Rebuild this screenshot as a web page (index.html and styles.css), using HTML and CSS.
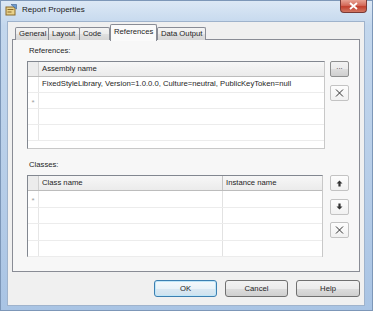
FILE: index.html
```html
<!DOCTYPE html>
<html lang="en">
<head>
  <meta charset="UTF-8" />
  <title>Report Properties</title>
  <link rel="stylesheet" href="styles.css">
</head>
<body>
  <div class="window">
    <div class="titlebar">
      <svg class="app-icon" width="12" height="12" viewBox="0 0 12 12">
        <rect x="1" y="3" width="9" height="8" fill="#e8d18a" stroke="#8a6a2a" stroke-width="1"/>
        <rect x="2.5" y="5" width="6" height="1" fill="#8a6a2a"/>
        <rect x="2.5" y="7.5" width="4" height="1" fill="#8a6a2a"/>
        <path d="M6 0.5 L11.5 0.5 L11.5 5 Z" fill="#6b9ad0" stroke="#3a5f8e" stroke-width="0.6"/>
      </svg>
      <span class="title">Report Properties</span>
      <div class="close-btn">
        <svg width="9" height="8" viewBox="0 0 9 8">
          <path d="M1 1 L8 7 M8 1 L1 7" stroke="#fff" stroke-width="1.8"/>
        </svg>
      </div>
    </div>

    <div class="client">
      <div class="tabs">
        <div class="tab">General</div>
        <div class="tab">Layout</div>
        <div class="tab">Code</div>
        <div class="tab active">References</div>
        <div class="tab">Data Output</div>
      </div>

      <div class="panel">
        <div class="label">References:</div>
        <div class="grid-row">
          <div class="grid grid-refs">
            <div class="g-head">
              <div class="cell corner"></div>
              <div class="cell col-wide">Assembly name</div>
            </div>
            <div class="g-line">
              <div class="cell rowhead"></div>
              <div class="cell col-wide">FixedStyleLibrary, Version=1.0.0.0, Culture=neutral, PublicKeyToken=null</div>
            </div>
            <div class="g-line">
              <div class="cell rowhead"><span class="star">*</span></div>
              <div class="cell col-wide"></div>
            </div>
            <div class="g-line">
              <div class="cell rowhead"></div>
              <div class="cell col-wide"></div>
            </div>
            <div class="g-line">
              <div class="cell rowhead"></div>
              <div class="cell col-wide"></div>
            </div>
          </div>
          <div class="side-btns gap8">
            <div class="sbtn raised">...</div>
            <div class="sbtn flat">
              <svg width="9" height="8" viewBox="0 0 9 8"><path d="M1 0.5 L8 7.5 M8 0.5 L1 7.5" stroke="#333" stroke-width="1"/></svg>
            </div>
          </div>
        </div>

        <div class="label label-classes">Classes:</div>
        <div class="grid-row">
          <div class="grid grid-classes">
            <div class="g-head">
              <div class="cell corner"></div>
              <div class="cell col-class">Class name</div>
              <div class="cell col-inst">Instance name</div>
            </div>
            <div class="g-line">
              <div class="cell rowhead"><span class="star">*</span></div>
              <div class="cell col-class"></div>
              <div class="cell col-inst"></div>
            </div>
            <div class="g-line">
              <div class="cell rowhead"></div>
              <div class="cell col-class"></div>
              <div class="cell col-inst"></div>
            </div>
            <div class="g-line">
              <div class="cell rowhead"></div>
              <div class="cell col-class"></div>
              <div class="cell col-inst"></div>
            </div>
            <div class="g-line">
              <div class="cell rowhead"></div>
              <div class="cell col-class"></div>
              <div class="cell col-inst"></div>
            </div>
          </div>
          <div class="side-btns gap7">
            <div class="sbtn flat">
              <svg width="7" height="7" viewBox="0 0 7 7"><path d="M3.5 0.5 L6.5 3.5 L4.6 3.5 L4.6 6.5 L2.4 6.5 L2.4 3.5 L0.5 3.5 Z" fill="#333"/></svg>
            </div>
            <div class="sbtn flat">
              <svg width="7" height="7" viewBox="0 0 7 7"><path d="M3.5 6.5 L6.5 3.5 L4.6 3.5 L4.6 0.5 L2.4 0.5 L2.4 3.5 L0.5 3.5 Z" fill="#333"/></svg>
            </div>
            <div class="sbtn flat">
              <svg width="9" height="8" viewBox="0 0 9 8"><path d="M1 0.5 L8 7.5 M8 0.5 L1 7.5" stroke="#333" stroke-width="1"/></svg>
            </div>
          </div>
        </div>
      </div>

      <div class="buttons">
        <div class="btn default">OK</div>
        <div class="btn">Cancel</div>
        <div class="btn help">Help</div>
      </div>
    </div>
  </div>
</body>
</html>
```

FILE: styles.css
```css
body {
  margin: 0;
  font-family: 'Liberation Sans', Arial, sans-serif;
  font-size: 7.7px;
  color: #1e1e1e;
}

.window {
  width: 373px;
  height: 311px;
  box-sizing: border-box;
  background: linear-gradient(180deg, #dce8f5 0%, #c3d7ed 8%, #b6cde8 60%, #a9c4e4 100%);
  border: 1px solid #7d97b8;
  padding: 0 7px 5px 6px;
}

.titlebar {
  height: 20px;
  display: flex;
  align-items: flex-start;
}

.app-icon {
  margin: 3px 0 0 -2px;
}

.title {
  margin: 4px 0 0 5px;
  font-size: 8px;
  color: #1a1a1a;
}

.close-btn {
  margin-left: auto;
  margin-top: -1px;
  width: 27px;
  height: 13px;
  box-sizing: border-box;
  border: 1px solid #7a3a36;
  border-top: none;
  border-radius: 0 0 4px 4px;
  background: linear-gradient(180deg, #e8a293 0%, #d46a5a 45%, #c2402e 55%, #d27763 100%);
  display: flex;
  align-items: center;
  justify-content: center;
  margin-right: -2px;
}

.client {
  height: 285px;
  box-sizing: border-box;
  background: #f0f0f0;
  border: 1px solid #9fb3cc;
  padding-top: 2px;
}

.tabs {
  display: flex;
  align-items: flex-end;
  height: 16px;
  margin-left: 7px;
  position: relative;
  z-index: 1;
}

.tab {
  height: 13px;
  box-sizing: border-box;
  border: 1px solid #898c95;
  border-bottom: none;
  margin-right: -1px;
  padding: 0 3px;
  line-height: 12px;
  white-space: nowrap;
  background: linear-gradient(180deg, #f4f4f4 0%, #ececec 50%, #e0e0e0 51%, #d6d6d6 100%);
  border-radius: 2px 2px 0 0;
}

.tab:nth-child(1) { width: 34px; }
.tab:nth-child(2) { width: 32px; }
.tab:nth-child(3) { width: 31px; }
.tab:nth-child(5) { width: 49px; }

.tab.active {
  height: 17px;
  width: 47px;
  margin: 0 0 -1px 1px;
  background: #fafafa;
  line-height: 14px;
  padding-bottom: 2px;
}

.panel {
  height: 233px;
  box-sizing: border-box;
  margin: -1px 4px 0 4px;
  border: 1px solid #898c95;
  background: #f7f7f7;
  padding: 5px 0 0 14px;
}

.label {
  height: 11px;
  line-height: 11px;
  padding-left: 2px;
}

.label-classes {
  margin-top: 10px;
}

.grid-row {
  display: flex;
  margin-top: 5px;
}

.grid {
  width: 298px;
  box-sizing: border-box;
  background: #fff;
  border: 1px solid #828790;
  border-right-color: #c8c8c8;
  border-bottom-color: #c8c8c8;
}

.grid-refs { height: 88px; }
.grid-classes { height: 82px; width: 296px; }

.g-head {
  display: flex;
  height: 15px;
  box-sizing: border-box;
  background: linear-gradient(180deg, #f7f7f7 0%, #ebebeb 100%);
  border-bottom: 1px solid #bcbcbc;
}

.g-line {
  display: flex;
  height: 16px;
  box-sizing: border-box;
  border-bottom: 1px solid #ececec;
}

.grid-classes .g-line { height: 16.5px; }

.cell {
  box-sizing: border-box;
  height: 100%;
  line-height: 14px;
  padding-left: 3px;
  white-space: nowrap;
  overflow: hidden;
}

.corner, .rowhead {
  width: 11px;
  padding: 0;
  border-right: 1px solid #d0d0d0;
}

.corner {
  background: #ececec;
}

.rowhead {
  border-right-color: #e6e6e6;
}

.star {
  display: block;
  text-align: center;
  color: #a0a0a0;
  font-size: 8px;
  line-height: 20px;
}

.col-wide { flex: 1; }
.col-class { width: 184px; border-right: 1px solid #e2e2e2; }
.g-head .col-class { border-right-color: #c4c4c4; }
.col-inst { flex: 1; }

.side-btns {
  display: flex;
  flex-direction: column;
}

.side-btns.gap8 { gap: 8px; margin-left: 5px; }
.side-btns.gap7 { gap: 7.5px; margin-left: 7px; }

.sbtn {
  width: 19px;
  height: 16px;
  box-sizing: border-box;
  border-radius: 2px;
  display: flex;
  align-items: center;
  justify-content: center;
}

.sbtn.raised {
  border: 1px solid #8e8f8f;
  background: linear-gradient(180deg, #f2f2f2 0%, #ebebeb 50%, #dddddd 51%, #cfcfcf 100%);
  line-height: 10px;
  align-items: flex-start;
  color: #333;
}

.sbtn.flat {
  border: 1px solid #c3c3c3;
  background: linear-gradient(180deg, #fdfdfd 0%, #f1f1f1 100%);
}

.buttons {
  display: flex;
  justify-content: flex-end;
  gap: 8px;
  margin: 8px 4px 0 0;
}

.btn {
  width: 63px;
  height: 17px;
  box-sizing: border-box;
  border: 1px solid #707070;
  border-radius: 3px;
  background: linear-gradient(180deg, #f2f2f2 0%, #ebebeb 50%, #dddddd 51%, #cfcfcf 100%);
  text-align: center;
  line-height: 15px;
}

.btn.default {
  border-color: #3c7fb1;
  box-shadow: inset 0 0 0 1px #bfe6f8;
  background: linear-gradient(180deg, #f4f9fc 0%, #eaf3f9 50%, #dbe9f3 51%, #cfe2ef 100%);
}

.btn.help {
  width: 64px;
}
```
